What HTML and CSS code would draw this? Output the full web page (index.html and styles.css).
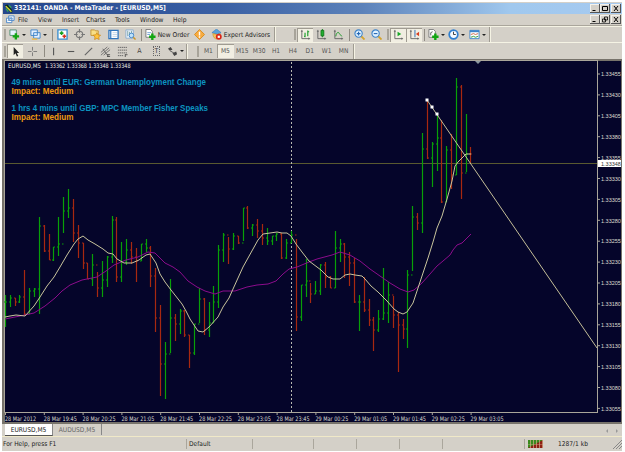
FILE: index.html
```
<!DOCTYPE html>
<html lang="en">
<head>
    <meta charset="UTF-8">
    <meta name="viewport" content="width=device-width, initial-scale=1.0">
    <title>332141: OANDA - MetaTrader - [EURUSD,M5]</title>
    <link rel="stylesheet" href="styles.css">
</head>
<body>

<div class="window">
    <div class="titlebar">
        <svg class="logo" viewBox="0 0 10 10"><path d="M0 1l3-1 6 7v3H7z" fill="#0b2a1c"/><path d="M1 2l7 7" stroke="#d8e02c" stroke-width="1.6"/><path d="M1 5l3 4M5 1l3 3" stroke="#35b54a" stroke-width="1.4"/></svg>
        <span class="title">332141: OANDA - MetaTrader - [EURUSD,M5]</span>
        <div class="winbtns">
            <i><svg viewBox="0 0 8 7"><path d="M1.5 5.5h3" stroke="#000"/></svg></i>
            <i><svg viewBox="0 0 8 7"><path d="M1.5 1.5h5v4h-5z" fill="none" stroke="#000"/></svg></i>
            <i class="close"><svg viewBox="0 0 8 7"><path d="M2 1l4 5M6 1L2 6" stroke="#000"/></svg></i>
        </div>
    </div>

    <div class="menubar">
        <svg class="menuicon" viewBox="0 0 10 10"><path d="M.5 3.500h6v5h-6zM3 1h6v5H3z" fill="#fff" stroke="#4a86c8"/><path d="M1.500 7l2-2 2 1M4 4l2-1 2 1" stroke="#4a86c8" fill="none" stroke-width=".7"/></svg>
        <span class="m-file">File</span>
        <span class="m-view">View</span>
        <span class="m-insert">Insert</span>
        <span class="m-charts">Charts</span>
        <span class="m-tools">Tools</span>
        <span class="m-window">Window</span>
        <span>Help</span>
        <div class="winbtns">
            <i><svg viewBox="0 0 8 7"><path d="M1.5 5.5h3" stroke="#000"/></svg></i>
            <i><svg viewBox="0 0 8 7"><path d="M3.500 1h3v3h-3zM1.500 3h3v3h-3z" fill="#d4d0c8" stroke="#000" stroke-width=".8"/></svg></i>
            <i class="close"><svg viewBox="0 0 8 7"><path d="M2 1l4 5M6 1L2 6" stroke="#000"/></svg></i>
        </div>
    </div>

    <div class="toolbar main">
        <b class="grip"></b>
        <span class="btn w20"><svg viewBox="0 0 12 12"><path d="M1 1h7v6H1z" fill="#e8f4ff" stroke="#4f8f70"/><path d="M7.500 4.500v7M4 8h7" stroke="#12a512" stroke-width="2.600"/></svg><u></u></span>
        <span class="btn w23"><svg viewBox="0 0 12 12"><path d="M1 1h7v6H1zM4 4h7v6H4z" fill="#e4f0ff" stroke="#3d83c9"/><path d="M2 11h6" stroke="#efb642" stroke-width="1.500"/></svg><u></u></span>
        <b class="sep"></b>
        <span class="btn w17"><svg viewBox="0 0 12 12"><path d="M1 1h10v10H1z" fill="#fff" stroke="#3d8fd0" stroke-width="1.500"/><path d="M5 2.500v4M3 4.500h4" stroke="#14a020" stroke-width="1.700"/><path d="M8 6v4M6 8h4" stroke="#d8301c" stroke-width="1.700"/></svg></span>
        <span class="btn w16"><svg viewBox="0 0 12 12"><circle cx="6" cy="6" r="3.500" fill="none" stroke="#777" stroke-width="1.200"/><path d="M6 0v4M6 8v4M0 6h4M8 6h4" stroke="#777" stroke-width="1.300"/></svg></span>
        <span class="btn w17"><svg viewBox="0 0 12 12"><path d="M1 1h4l1 1h3v5H1z" fill="#f8df87" stroke="#c59434"/><path d="M7.500 4l1.200 2.400 2.800.3-2 2 .5 2.800-2.500-1.300L5 11.500 5.500 8.700l-2-2 2.800-.3z" fill="#ffc43c" stroke="#cc8616" stroke-width=".8"/></svg></span>
        <span class="btn w18"><svg viewBox="0 0 12 12"><path d="M1 1.500h10v9H1z" fill="#fff" stroke="#2f75bd" stroke-width="1.400"/><path d="M3 2v8" stroke="#2f75bd" stroke-width="1.300"/><path d="M5 4h5M5 6h5M5 8h5" stroke="#a5c2dd" stroke-width=".7"/></svg></span>
        <span class="btn w17"><svg viewBox="0 0 12 12"><path d="M1 1h8v9H1z" fill="#f2f8ff" stroke="#8baccc"/><path d="M3 2v6M5 3v4M7 2v3" stroke="#588" stroke-width=".8"/><circle cx="7" cy="7" r="2.500" fill="#bfe2fa" stroke="#3d83c9"/><path d="M9 9l2.500 2.500" stroke="#c99428" stroke-width="1.500"/></svg></span>
        <b class="sep"></b>
        <span class="btn order"><svg viewBox="0 0 12 12"><path d="M1 .5h5l2 2V9H1z" fill="#fff" stroke="#777"/><path d="M2.500 4h4M2.500 6h3" stroke="#4a86c8" stroke-width=".8"/><path d="M8 5v7M4.500 8.500h7" stroke="#12a512" stroke-width="2.600"/></svg><span>New Order</span></span>
        <span class="btn w17"><svg viewBox="0 0 12 12"><path d="M6 .5L11.500 6 6 11.500.5 6z" fill="#f8ac40" stroke="#d98b1b"/><path d="M6 3v4M6 8v1.500" stroke="#fff" stroke-width="1.500"/></svg></span>
        <span class="btn advisors"><svg viewBox="0 0 12 12"><path d="M1 4l5-4 5 4-4 2z" fill="#5aa3da" stroke="#2f75bd" stroke-width=".6"/><path d="M2 5c0 4 2 6 5 6l3-6-3 1z" fill="#f6c25c" stroke="#bd8b2c" stroke-width=".6"/><circle cx="8.500" cy="8.500" r="3.200" fill="#db2516"/><path d="M7.300 7.300h2.400v2.400H7.300z" fill="#fff"/></svg><span>Expert Advisors</span></span>
        <b class="endcap"></b>
        <b class="grip grip2"></b>
        <span class="btn w16 on"><svg viewBox="0 0 12 12"><path d="M2 1v9.500h9M1 2.500h2M9.500 9.500v2" stroke="#666" fill="none"/><path d="M5.500 4v5M4.500 8h1M8.500 1.500V8M8.500 3h1.500" stroke="#159a24" fill="none" stroke-width="1.200"/></svg></span>
        <span class="btn w17"><svg viewBox="0 0 12 12"><path d="M2 1v9.500h9M1 2.500h2M9.500 9.500v2" stroke="#666" fill="none"/><path d="M7 0v9" stroke="#147a1c"/><path d="M5.500 1.500h3v6h-3z" fill="#20b030" stroke="#147a1c"/></svg></span>
        <span class="btn w17"><svg viewBox="0 0 12 12"><path d="M2 1v9.500h9M1 2.500h2M9.500 9.500v2" stroke="#666" fill="none"/><path d="M3 8c1-5 3-5 4-3s2 2 3 3" stroke="#159a24" fill="none"/></svg></span>
        <b class="sep"></b>
        <span class="btn w17"><svg viewBox="0 0 12 12"><path d="M7.500 7.500l4 4" stroke="#d4a32c" stroke-width="2"/><circle cx="5" cy="5" r="4" fill="#dff1ff" stroke="#3d83c9" stroke-width="1.200"/><path d="M5 3v4M3 5h4" stroke="#2768b4" stroke-width="1.200"/></svg></span>
        <span class="btn w17"><svg viewBox="0 0 12 12"><path d="M7.500 7.500l4 4" stroke="#d4a32c" stroke-width="2"/><circle cx="5" cy="5" r="4" fill="#dff1ff" stroke="#3d83c9" stroke-width="1.200"/><path d="M3 5h4" stroke="#2768b4" stroke-width="1.200"/></svg></span>
        <b class="grip"></b>
        <span class="btn w16 on"><svg viewBox="0 0 12 12"><path d="M2 1v9.500h9M1 2.500h2M9.500 9.500v2" stroke="#666" fill="none"/><path d="M5 3l4 2.500L5 8z" fill="#18a828"/></svg></span>
        <span class="btn w16 on"><svg viewBox="0 0 12 12"><path d="M2 1v9.500h9M1 2.500h2M9.500 9.500v2" stroke="#666" fill="none"/><path d="M6.500 1v8" stroke="#2768b4"/><path d="M11 3L7.500 5.500 11 8z" fill="#d84020"/></svg></span>
        <b class="sep"></b>
        <span class="btn w20"><svg viewBox="0 0 12 12"><path d="M1 .5h5l2 2V9H1z" fill="#fff" stroke="#777"/><path d="M3 7V4l2-1" stroke="#555" fill="none"/><path d="M8 5v7M4.500 8.500h7" stroke="#12a512" stroke-width="2.600"/></svg><u></u></span>
        <span class="btn w21"><svg viewBox="0 0 12 12"><circle cx="6" cy="6" r="4.700" fill="#f4faff" stroke="#2f7fd0" stroke-width="1.900"/><path d="M6 3v3h2.500" stroke="#333" fill="none"/></svg><u></u></span>
        <span class="btn w21"><svg viewBox="0 0 12 12"><path d="M1 1.500h10v9H1z" fill="#fff" stroke="#3d83c9"/><path d="M1 2.500h10" stroke="#3d83c9" stroke-width="2"/><path d="M2 6l3-1 2 1 3-1" stroke="#c64" fill="none"/><path d="M2 9l3-1 2 1 3-1" stroke="#2a9a38" fill="none"/></svg><u></u></span>
        <b class="endcap"></b>
    </div>

    <div class="toolbar lines">
        <b class="grip"></b>
        <span class="btn w16 on"><svg viewBox="0 0 12 12"><path d="M4 1v9l2-2 1.500 3.500L9 11 7.500 7.500H10z" fill="#222"/></svg></span>
        <span class="btn w19"><svg viewBox="0 0 12 12"><path d="M6 1v4M6 7v4M1 6h4M7 6h4" stroke="#777"/></svg></span>
        <b class="sep"></b>
        <span class="btn w17"><svg viewBox="0 0 12 12"><path d="M5 2v8" stroke="#555" stroke-width="1.200"/></svg></span>
        <span class="btn w17"><svg viewBox="0 0 12 12"><path d="M2 6h7" stroke="#555" stroke-width="1.200"/></svg></span>
        <span class="btn w17"><svg viewBox="0 0 12 12"><path d="M2 10l8-8" stroke="#666" stroke-width="1.200"/></svg></span>
        <span class="btn w17"><svg viewBox="0 0 12 12"><path d="M1 7l7-6M1 10L10 2M4 10l7-6M3 3l5 7" stroke="#555" stroke-width=".8"/><path d="M8 9.500h3M8 11.500h3M8.500 9v3" stroke="#333" stroke-width=".8"/></svg></span>
        <span class="btn w17"><svg viewBox="0 0 12 12"><path d="M1 1.500h10M1 4.500h10M1 7.500h10M1 10.500h6" stroke="#555" stroke-width=".9" stroke-dasharray="1.500 .6"/><path d="M9 9v3M9 9.500h2.500" stroke="#333" stroke-width=".8"/></svg></span>
        <span class="btn w17 glyph">A</span>
        <span class="btn w17 glyph"><em>T</em></span>
        <span class="btn w20"><svg viewBox="0 0 12 12"><path d="M1 3l3-2 2 3-3 1zM6 8l4-2 1 3-3 2z" fill="#444"/><path d="M3 5l5 3" stroke="#555"/></svg><u></u></span>
        <b class="endcap"></b>
        <b class="grip grip3"></b>
        <span class="tf">M1</span>
        <span class="tf on">M5</span>
        <span class="tf">M15</span>
        <span class="tf">M30</span>
        <span class="tf">H1</span>
        <span class="tf">H4</span>
        <span class="tf">D1</span>
        <span class="tf">W1</span>
        <span class="tf">MN</span>
        <b class="endcap"></b>
    </div>

    <svg class="chart" viewBox="2 59 620 365">
        <rect class="frame" x="2" y="59" width="620" height="365"/>
        <rect class="back" x="5" y="61" width="616" height="361"/>
        <path class="axis" d="M4.500 61V412.500H597.500M597.500 61V413M4 60.500H598"/>
        <path class="marker" d="M475 61h6l-3 3z"/>
        <path class="priceline" d="M5 163.500H597"/>
        <path class="daysep" d="M291.500 62V412"/>
        <g id="bars"></g>
        <polyline class="slow" points="5,319 20,316 34,313 45,306 55,298 62,291 70,285 82,280 97,277 106,271 114,265 126,260 138,257 148,252 155,253 165,263 173,267 180,272 188,281 197,287 205,291 215,294 223,291 235,291 247,287 257,285 268,284 276,281 283,274 289,269 297,267 309,262 317,259 332,255 340,252 350,255 360,261 370,269 380,276 390,283 400,289 408,292 414,290 422,283 430,274 437,266 443,261 450,255 453,250 457,245 462,243 471,234"/>
        <polyline class="fast" points="5,317 10,316 16,315 25,316 34,306 40,297 47,286 54,277 60,267 67,255 74,244 78,239 83,236 88,240 95,244 103,249 108,253 113,254 117,259 124,263 132,263 139,260 146,255 150,254 156,263 160,274 165,282 171,290 182,304 186,311 190,319 194,325 198,331 203,332 209,327 218,317 223,307 229,298 233,289 238,278 243,267 248,258 253,249 258,240 263,234 270,233 277,232 282,233 287,233 291,236 296,244 302,252 309,261 321,270 328,277 333,279 340,279 345,275 350,274 355,275 362,276 365,279 371,286 378,292 387,301 394,309 398,312 403,314 407,312 413,303 418,288 423,273 428,258 433,242 437,228 442,216 447,199 452,181 455,166 458,162 466,154 471,154"/>
        <path class="trend" d="M427 100L597 348"/>
        <path class="handle" d="M425.500 98.500h3v3h-3zM430.500 105.500h3v3h-3zM435.500 112.500h3v3h-3z"/>
        <text class="quote" x="8" y="68.300" textLength="33" lengthAdjust="spacingAndGlyphs">EURUSD,M5</text>
        <text class="quote" x="45" y="68.300" textLength="85.500" lengthAdjust="spacingAndGlyphs">1.33362 1.33368 1.33348 1.33348</text>
        <text class="news" x="11.500" y="84.800" textLength="194.500" lengthAdjust="spacingAndGlyphs">49 mins until EUR: German Unemployment Change</text>
        <text class="news impact" x="11.500" y="93.600" textLength="62" lengthAdjust="spacingAndGlyphs">Impact: Medium</text>
        <text class="news" x="11.500" y="111.300" textLength="196.500" lengthAdjust="spacingAndGlyphs">1 hrs 4 mins until GBP: MPC Member Fisher Speaks</text>
        <text class="news impact" x="11.500" y="120.200" textLength="62" lengthAdjust="spacingAndGlyphs">Impact: Medium</text>
        <g id="prices"></g>
        <g id="times"></g>
        <rect class="pricebox" x="598" y="160" width="23" height="7"/>
        <text class="price current" x="601" y="165.800">1.33348</text>
    </svg>

    <div class="tabs">
        <span class="tab active">EURUSD,M5</span>
        <span class="tab">AUDUSD,M5</span>
        <span class="arrows"><svg viewBox="0 0 14 6"><path d="M3 1v4L1 3zM11 1v4l2-2z" fill="#999"/></svg></span>
    </div>

    <div class="status">
        <span class="help">For Help, press F1</span>
        <span class="profile">Default</span>
        <span class="cell c1"></span>
        <span class="cell c2"></span>
        <span class="cell c2"></span>
        <span class="cell c2"></span>
        <span class="cell c2"></span>
        <span class="traffic">
            <svg viewBox="0 0 15 8"><rect width="15" height="8" fill="#8f1f14"/><path d="M0 0h15L0 8z" fill="#3a8a1e"/><path d="M2.500 0v8M5.500 0v8M8.500 0v8M11.500 0v8M14.500 0v8" stroke="#d4b08c" stroke-width=".7"/><path d="M0 4.500h15" stroke="#d4b08c" stroke-width=".4"/></svg>
            <span>1287/1 kb</span>
        </span>
        <svg class="resize" viewBox="0 0 9 9"><path d="M0 9l9-9M3 9l6-6M6 9l3-3" stroke="#888"/></svg>
    </div>
</div>

<script src="chart.js"></script>
</body>
</html>
```

FILE: styles.css
```
body {
    margin: 0;
    background-color: #fff;
    font-family: "DejaVu Sans Condensed", "DejaVu Sans", sans-serif;
    font-size: 6.6px;
    color: #222;
}
.window {
    width: 620px;
    height: 449px;
    margin: 2px 3px 0 2px;
    background-color: #d4d0c8;
    display: flex;
    flex-direction: column;
    overflow: hidden;
}
.window svg {
    display: block;
    flex: none;
}

/* title and menu */
.titlebar {
    height: 11px;
    margin-top: 1px;
    margin-left: 1px;
    padding: 0 1px 0 2px;
    display: flex;
    align-items: center;
    background: linear-gradient(to right, #24468c 0%, #3a60a4 35%, #5c82ba 58%, #a0c8ee 82%, #a6caf0 100%);
}
.logo {
    width: 8px;
    height: 9px;
}
.title {
    margin-left: 1px;
    font-size: 6.7px;
    font-weight: bold;
    line-height: 11px;
    white-space: nowrap;
    color: #fff;
}
.winbtns {
    margin-left: auto;
    display: flex;
}
.winbtns i {
    width: 9px;
    height: 8px;
    background-color: #d4d0c8;
    border: solid;
    border-width: 0 1px 1px 0;
    border-color: #555;
    box-shadow: inset 1px 1px #f4f2ec;
}
.winbtns .close {
    margin-left: 1px;
}
.winbtns svg {
    width: 8px;
    height: 7px;
    margin: 1px 0 0 1px;
}
.menubar {
    height: 11px;
    padding: 0 1px 0 4px;
    display: flex;
    align-items: center;
    border-bottom: 1px solid #aaa69c;
}
.menuicon {
    width: 9px;
    height: 9px;
    margin-right: 3px;
}
.m-file { width: 20px; }
.m-view { width: 24px; }
.m-insert { width: 24px; }
.m-charts { width: 29px; }
.m-tools { width: 25px; }
.m-window { width: 33px; }

/* toolbars */
.toolbar {
    height: 16px;
    box-sizing: border-box;
    display: flex;
    align-items: center;
    border-top: 1px solid #f5f3e4;
}
.toolbar.lines {
    height: 17px;
}
.btn {
    height: 14px;
    flex: none;
    display: flex;
    align-items: center;
    justify-content: center;
    gap: 2px;
    box-sizing: border-box;
}
.btn svg {
    width: 11px;
    height: 11px;
}
.btn u {
    border: 2px solid transparent;
    border-top-color: #222;
    border-bottom: 0;
}
.on {
    background-color: #f1eee2;
    box-shadow: inset 1px 1px #a09c92;
}
.w16 { width: 16px; }
.w17 { width: 17px; }
.w18 { width: 18px; }
.w19 { width: 19px; }
.w20 { width: 20px; }
.w21 { width: 21px; }
.w23 { width: 23px; }
.order {
    width: 48px;
    white-space: nowrap;
}
.advisors {
    width: 65px;
    white-space: nowrap;
}
.grip {
    width: 2px;
    height: 11px;
    margin: 0 1px 0 2px;
    border: solid #a8a49a;
    border-width: 0 1px;
    box-sizing: border-box;
    flex: none;
}
.grip2 {
    margin-left: 18px;
}
.grip3 {
    margin-left: 9px;
}
.sep {
    width: 1px;
    height: 12px;
    margin: 0 1px 0 2px;
    background-color: #8f8b82;
    flex: none;
}
.endcap {
    width: 1px;
    height: 15px;
    margin-left: 1px;
    background-color: #a09c92;
    border-right: 1px solid #f5f3e4;
    flex: none;
}
.glyph {
    font-size: 7px;
    color: #444;
}
.glyph em {
    font-style: normal;
    line-height: 8px;
    padding: 0 1px;
    border: 1px dotted #666;
}
.tf {
    width: 16.900px;
    height: 14px;
    line-height: 15px;
    text-align: center;
    color: #555;
    flex: none;
}

/* chart */
.chart {
    width: 620px;
    height: 365px;
}
.frame { fill: #77736b; }
.back { fill: #05052a; }
.axis {
    fill: none;
    stroke: #aaa69a;
}
.marker { fill: #8c98a0; }
.priceline {
    stroke: #5a5a30;
}
.daysep {
    stroke: #b8b8b0;
    stroke-dasharray: 2 2;
}
.up { stroke: #08a008; }
.down { stroke: #a82810; }
.bar {
    fill: none;
    stroke-width: 1.200;
}
.slow, .fast, .trend {
    fill: none;
    stroke-width: 1;
}
.slow { stroke: #8c0c8c; }
.fast { stroke: #c8c49c; }
.trend { stroke: #c4be98; }
.handle {
    fill: #fff;
}
.chart text {
    font-size: 6.2px;
    fill: #dcdcd0;
}
.chart .price {
    font-family: "Liberation Sans", Arial, sans-serif;
    font-size: 5.500px;
}
.chart .quote {
    fill: #f0f0e8;
}
.chart .news {
    font-family: "Liberation Sans", Arial, sans-serif;
    font-size: 8.300px;
    font-weight: bold;
    fill: #0c94c0;
}
.chart .impact { fill: #f09a10; }
.pricebox { fill: #fff; }
.chart .current { fill: #333; }
.tick { stroke: #aaa69a; }

/* tabs and status bar */
.tabs {
    height: 13px;
    box-sizing: border-box;
    padding-left: 3px;
    display: flex;
    border-bottom: 1px solid #f0e9c8;
}
.tab {
    width: 48px;
    height: 11px;
    line-height: 12px;
    text-align: center;
    color: #666;
    border-right: 1px solid #888;
}
.tab.active {
    width: 47px;
    background-color: #fff;
    color: #222;
    border-bottom: 1px solid #555;
}
.arrows {
    margin: 4px 3px 0 auto;
}
.arrows svg {
    width: 14px;
    height: 6px;
}
.status {
    height: 14px;
    padding-left: 1px;
    display: flex;
    align-items: center;
}
.status > span {
    height: 10px;
    line-height: 10px;
    box-sizing: border-box;
    flex: none;
}
.status .help {
    width: 183px;
}
.status .profile {
    width: 66px;
    padding-left: 2px;
    border-left: 1px solid #aaa69c;
}
.status .cell {
    border-left: 1px solid #aaa69c;
}
.status .c1 { width: 61px; }
.status .c2 { width: 43px; }
.status .traffic {
    display: flex;
    align-items: center;
    gap: 15px;
    padding-left: 3px;
    margin-left: 39px;
    border-left: 1px solid #aaa69c;
}
.traffic svg {
    width: 15px;
    height: 8px;
}
.resize {
    width: 9px;
    height: 9px;
    margin-left: auto;
}
```

FILE: chart.js
```
// u = up bar, d = down bar; then high, low, close in chart pixels
const bars = [
    'u 295 327 302', 'u 295 307 298', 'd 298 306 302', 'u 295 303 297', 'd 270 315 314', 'u 288 314 291',
    'u 288 297 289', 'u 217 314 226', 'd 225 252 251', 'd 234 260 260', 'u 247 261 247', 'u 217 256 244',
    'u 197 233 211', 'u 189 218 208', 'd 199 242 233', 'd 225 258 243', 'd 243 269 263', 'd 263 279 279',
    'u 254 286 265', 'd 272 297 288', 'u 261 297 280', 'u 256 287 257', 'u 216 263 220', 'd 217 282 277',
    'u 242 282 262', 'u 239 265 250', 'd 242 264 257', 'd 248 282 261', 'u 244 261 244', 'u 239 252 248',
    'd 246 287 276', 'd 268 332 318', 'd 305 396 364', 'u 342 399 354', 'u 279 353 318', 'd 314 341 324',
    'u 309 334 311', 'd 310 337 335', 'd 335 368 353', 'u 324 355 324', 'u 288 323 299', 'd 298 335 330',
    'u 302 337 323', 'u 286 323 302', 'u 245 308 250', 'u 233 262 235', 'd 237 264 249', 'u 233 250 236',
    'd 236 244 243', 'u 208 241 208', 'd 206 229 228', 'u 224 236 225', 'd 219 238 231', 'd 224 245 238',
    'u 228 245 241', 'u 236 245 236', 'u 233 241 234', 'd 233 259 258', 'u 239 259 243', 'u 231 243 235',
    'd 239 331 317', 'u 285 321 285', 'u 259 297 281', 'd 283 303 294', 'u 281 294 291', 'u 264 295 265',
    'd 262 288 277', 'd 276 288 288', 'u 231 288 248', 'u 239 262 244', 'd 243 278 257', 'd 252 286 263',
    'd 258 303 302', 'u 295 331 302', 'd 277 312 310', 'd 299 326 320', 'd 317 351 330', 'u 310 332 319',
    'u 268 320 313', 'u 282 323 295', 'd 296 328 315', 'd 312 372 325', 'd 319 339 329', 'u 270 348 275',
    'u 206 271 217', 'd 213 230 223', 'u 133 233 149', 'd 100 159 158', 'u 142 187 144', 'u 114 171 138',
    'd 120 203 202', 'u 146 202 150', 'd 134 189 175', 'u 78 175 87', 'd 85 199 173', 'u 114 172 154',
    'd 147 164 154'
];

let html = '';
let open = 302;
bars.forEach((bar, i) => {
    const [dir, high, low, close] = bar.split(' ');
    const x = Math.floor(5.4 + i * 4.85) + 0.5;
    html += `<path class="bar ${dir === 'u' ? 'up' : 'down'}" d="M${x} ${high}V${low}M${x} ${close}h1.5M${x} ${open}h-1.5"/>`;
    open = close;
});
document.getElementById('bars').innerHTML = html;

// price scale
html = '';
for (let i = 0; i <= 16; i++) {
    const y = 74 + i * 20.9;
    html += `<path class="tick" d="M597 ${y.toFixed(1)}h3"/>`;
    html += `<text class="price" x="601" y="${(y + 2.2).toFixed(1)}">${(1.33455 - i * 0.00025).toFixed(5)}</text>`;
}
document.getElementById('prices').innerHTML = html;

// time scale
const times = ['28 Mar 2012', '28 Mar 19:45', '28 Mar 20:25', '28 Mar 21:05', '28 Mar 21:45', '28 Mar 22:25',
    '28 Mar 23:05', '28 Mar 23:45', '29 Mar 00:25', '29 Mar 01:05', '29 Mar 01:45', '29 Mar 02:25', '29 Mar 03:05'];
html = '';
times.forEach((time, i) => {
    const x = 5 + i * 38.8;
    html += `<path class="tick" d="M${(x + 0.5).toFixed(1)} 412v3"/>`;
    html += `<text x="${x.toFixed(1)}" y="420.6" textLength="${i ? 33 : 31}" lengthAdjust="spacingAndGlyphs">${time}</text>`;
});
document.getElementById('times').innerHTML = html;
```
